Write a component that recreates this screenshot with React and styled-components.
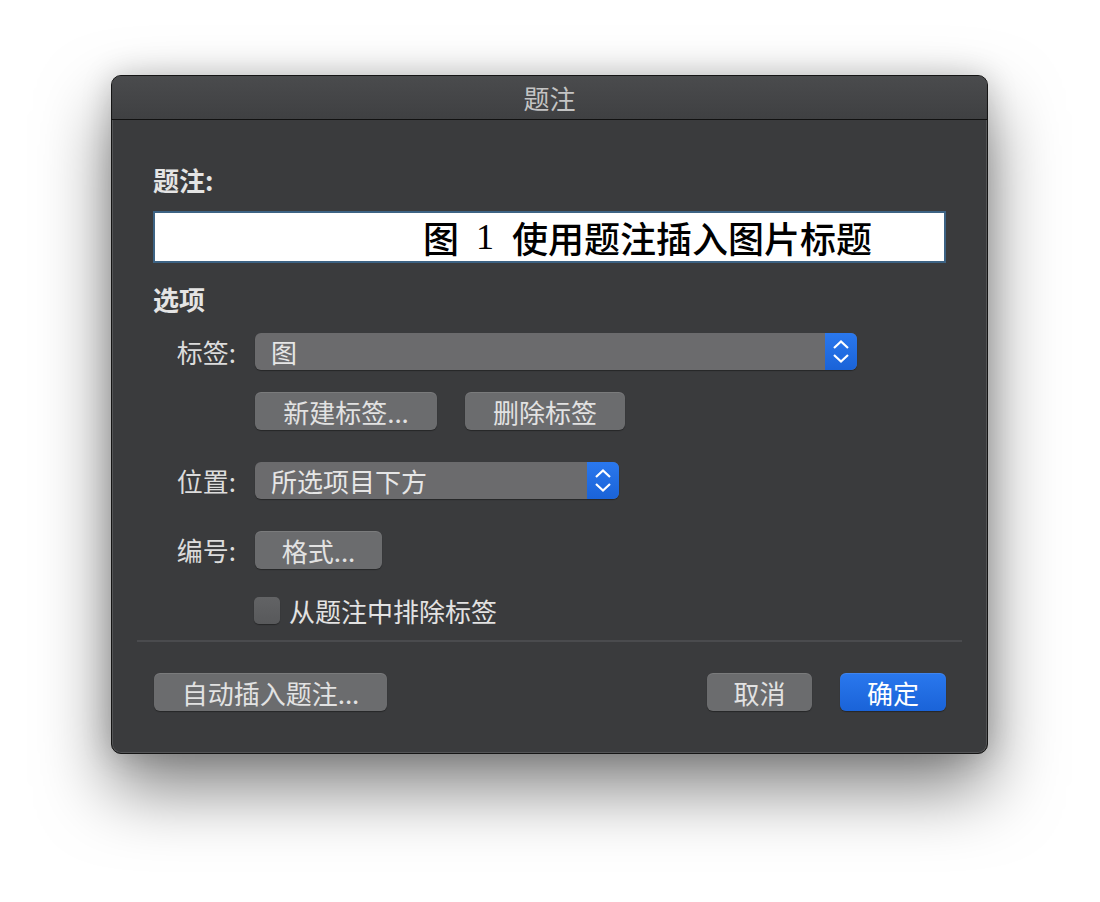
import styled, { createGlobalStyle } from "styled-components";

const GlobalStyle = createGlobalStyle`
  html, body {
    margin: 0;
    padding: 0;
    background: #ffffff;
  }
  body {
    font-family: "Noto Sans CJK SC", "Noto Sans", sans-serif;
  }
`;

const Page = styled.div`
  width: 1100px;
  height: 902px;
  padding: 75px 0 0 111px;
  box-sizing: border-box;
  overflow: hidden;
`;

const Window = styled.div`
  width: 877px;
  height: 679px;
  box-sizing: border-box;
  background: #3a3b3d;
  border: 1px solid #151515;
  border-radius: 10px;
  box-shadow: inset 0 0 0 1px rgba(255, 255, 255, 0.13),
    0 34px 70px rgba(0, 0, 0, 0.5), 0 0 30px rgba(0, 0, 0, 0.18);
  display: flex;
  flex-direction: column;
  overflow: hidden;
`;

const TitleBar = styled.div`
  height: 43px;
  flex-shrink: 0;
  display: flex;
  align-items: center;
  justify-content: center;
  background: linear-gradient(#4a4b4d, #3f4042);
  border-bottom: 1px solid #111;
  color: #c4c4c4;
  font-size: 26px;
`;

const Body = styled.div`
  padding: 42px 41px 0 41px;
  display: flex;
  flex-direction: column;
  flex: 1;
`;

const Heading = styled.div`
  color: #e4e4e4;
  font-size: 26px;
  font-weight: 700;
  line-height: 36px;
`;

const CaptionField = styled.div`
  margin-top: 13px;
  height: 52px;
  box-sizing: border-box;
  background: #fff;
  border: 2px solid #3d6384;
  display: flex;
  align-items: center;
  padding-left: 268px;
  color: #000;
  font-size: 36px;
  font-weight: 500;
  font-family: "Noto Sans CJK SC", sans-serif;
  line-height: 1;
`;

const Num = styled.span`
  font-family: "Liberation Serif", serif;
  font-weight: 400;
  margin: 0 18px 0 17px;
`;

const Options = styled.div`
  margin-top: 18px;
  display: flex;
  flex-direction: column;
`;

const Row = styled.div`
  display: flex;
  align-items: center;
  margin-top: ${(p) => p.$gap}px;
`;

const Label = styled.div`
  width: 83px;
  padding-right: 19px;
  text-align: right;
  color: #dcdcdc;
  font-size: 26px;
  line-height: 36px;
`;

const Select = styled.div`
  width: ${(p) => p.$w}px;
  height: 37px;
  box-sizing: border-box;
  display: flex;
  border-radius: 6px;
  overflow: hidden;
  background: #6b6b6d;
  box-shadow: 0 1px 1px rgba(0, 0, 0, 0.35);
`;

const SelectValue = styled.div`
  flex: 1;
  padding-left: 16px;
  color: #e6e6e6;
  font-size: 26px;
  line-height: 37px;
`;

const Stepper = styled.div`
  width: 32px;
  display: flex;
  align-items: center;
  justify-content: center;
  background: linear-gradient(#2a78ee, #1a63d8);
`;

const Button = styled.div`
  width: ${(p) => p.$w}px;
  height: 38px;
  box-sizing: border-box;
  border-radius: 6px;
  display: flex;
  align-items: center;
  justify-content: center;
  font-size: 26px;
  color: ${(p) => (p.$primary ? "#fff" : "#e2e2e2")};
  background: ${(p) =>
    p.$primary ? "linear-gradient(#2a78ee, #1a63d8)" : "#6b6c6e"};
  box-shadow: inset 0 1px 0 rgba(255, 255, 255, 0.1),
    0 1px 1px rgba(0, 0, 0, 0.35);
`;

const Indent = styled.div`
  display: flex;
  gap: 28px;
  margin-left: 102px;
`;

const CheckRow = styled.label`
  display: flex;
  align-items: center;
  gap: 9px;
  margin-left: 101px;
  margin-top: 23px;
  color: #e2e2e2;
  font-size: 26px;
`;

const Checkbox = styled.span`
  width: 26px;
  height: 27px;
  box-sizing: border-box;
  border-radius: 5px;
  background: linear-gradient(#626365, #58595b);
  box-shadow: 0 1px 1px rgba(0, 0, 0, 0.35);
`;

const Divider = styled.div`
  height: 2px;
  background: #4a4b4e;
  margin: 11px -16px 0 -16px;
`;

const Footer = styled.div`
  display: flex;
  align-items: center;
  margin-top: 31px;
  gap: 28px;
  padding-left: 1px;
`;

const Spacer = styled.div`
  flex: 1;
`;

function Chevrons() {
  return (
    <svg width="18" height="26" viewBox="0 0 18 26">
      <path d="M2 9 L9 2.5 L16 9" fill="none" stroke="#fff" strokeWidth="2.2" />
      <path d="M2 16 L9 22.5 L16 16" fill="none" stroke="#fff" strokeWidth="2.2" />
    </svg>
  );
}

export default function App() {
  return (
    <>
      <GlobalStyle />
      <Page>
        <Window>
          <TitleBar>题注</TitleBar>
          <Body>
            <Heading>题注:</Heading>
            <CaptionField>
              图<Num>1</Num>使用题注插入图片标题
            </CaptionField>
            <Options>
              <Heading>选项</Heading>
              <Row $gap={16}>
                <Label>标签:</Label>
                <Select $w={602}>
                  <SelectValue>图</SelectValue>
                  <Stepper>
                    <Chevrons />
                  </Stepper>
                </Select>
              </Row>
              <Row $gap={22}>
                <Indent>
                  <Button $w={182}>新建标签...</Button>
                  <Button $w={160}>删除标签</Button>
                </Indent>
              </Row>
              <Row $gap={32}>
                <Label>位置:</Label>
                <Select $w={364}>
                  <SelectValue>所选项目下方</SelectValue>
                  <Stepper>
                    <Chevrons />
                  </Stepper>
                </Select>
              </Row>
              <Row $gap={32}>
                <Label>编号:</Label>
                <Button $w={127}>格式...</Button>
              </Row>
              <CheckRow>
                <Checkbox />
                从题注中排除标签
              </CheckRow>
            </Options>
            <Divider />
            <Footer>
              <Button $w={233}>自动插入题注...</Button>
              <Spacer />
              <Button $w={105}>取消</Button>
              <Button $w={106} $primary>
                确定
              </Button>
            </Footer>
          </Body>
        </Window>
      </Page>
    </>
  );
}
